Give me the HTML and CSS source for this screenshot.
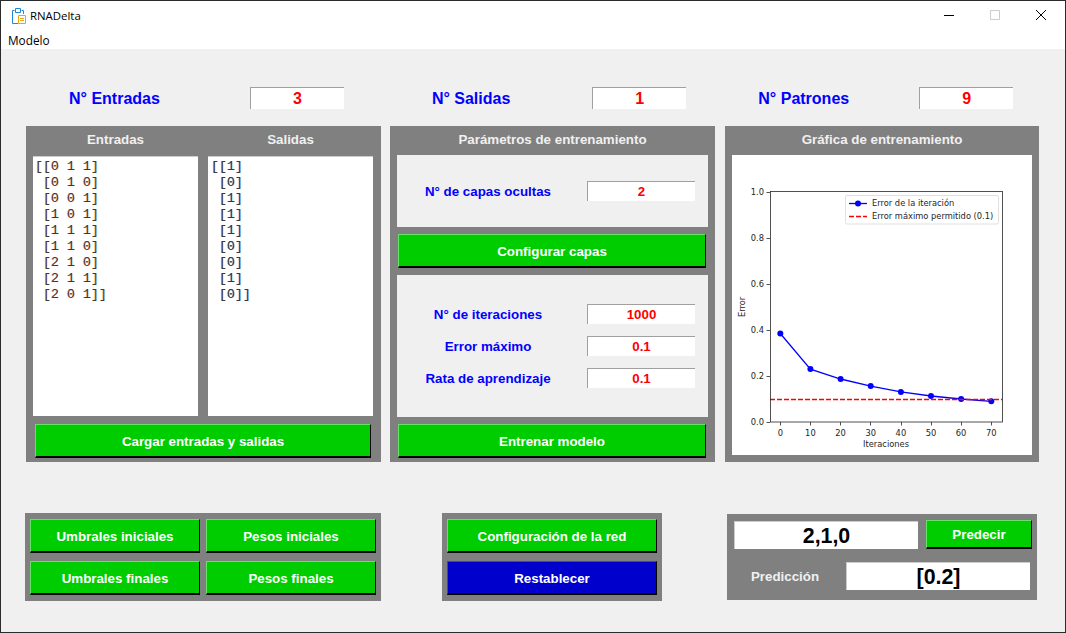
FILE: index.html
```html
<!DOCTYPE html>
<html lang="es">
<head>
    <meta charset="UTF-8">
    <title>RNADelta</title>
    <link rel="stylesheet" href="styles.css">
</head>
<body>
    <div class="window">
        <div class="titlebar">
            <svg class="app-icon" width="16" height="18" viewBox="0 0 16 18">
                <path d="M3.5 3.5H1.5V16.5H7M10.5 3.5H12.5V7" fill="none" stroke="#1e88d8"/>
                <path d="M4.5 1.5H9.5V5.5H4.5Z" fill="#fff" stroke="#1e88d8"/>
                <path d="M7.5 8.5H14.5V16.5H7.5Z" fill="#fff" stroke="#e8a317"/>
                <path d="M9 11.5H13M9 13.5H13" stroke="#e8a317"/>
            </svg>
            <span class="app-name">RNADelta</span>
            <div class="win-controls">
                <svg width="12" height="12" viewBox="0 0 12 12"><path d="M1 6.5H11" stroke="#000"/></svg>
                <svg width="12" height="12" viewBox="0 0 12 12"><path d="M1.5 1.5H10.5V10.5H1.5Z" fill="none" stroke="#ccc"/></svg>
                <svg width="12" height="12" viewBox="0 0 12 12"><path d="M1 1L11 11M11 1L1 11" stroke="#000"/></svg>
            </div>
        </div>
        <div class="menubar">Modelo</div>

        <main class="content">
            <div class="stats">
                <div class="stat stat-in"><span class="stat-label">N° Entradas</span><div class="field stat-field">3</div></div>
                <div class="stat stat-out"><span class="stat-label">N° Salidas</span><div class="field stat-field">1</div></div>
                <div class="stat stat-pat"><span class="stat-label">N° Patrones</span><div class="field stat-field">9</div></div>
            </div>

            <div class="panels">
                <section class="panel panel-data">
                    <div class="data-head"><span>Entradas</span><span>Salidas</span></div>
                    <div class="data-lists">
<pre class="list list-in">[[0 1 1]
 [0 1 0]
 [0 0 1]
 [1 0 1]
 [1 1 1]
 [1 1 0]
 [2 1 0]
 [2 1 1]
 [2 0 1]]</pre>
<pre class="list list-out">[[1]
 [0]
 [1]
 [1]
 [1]
 [0]
 [0]
 [1]
 [0]]</pre>
                    </div>
                    <button class="btn btn-wide">Cargar entradas y salidas</button>
                </section>

                <section class="panel panel-params">
                    <div class="panel-title">Parámetros de entrenamiento</div>
                    <div class="param-box box-layers">
                        <div class="param"><span class="param-label">N° de capas ocultas</span><div class="field param-field">2</div></div>
                    </div>
                    <button class="btn btn-wide">Configurar capas</button>
                    <div class="param-box box-train">
                        <div class="param"><span class="param-label">N° de iteraciones</span><div class="field param-field">1000</div></div>
                        <div class="param"><span class="param-label">Error máximo</span><div class="field param-field">0.1</div></div>
                        <div class="param"><span class="param-label">Rata de aprendizaje</span><div class="field param-field">0.1</div></div>
                    </div>
                    <button class="btn btn-wide">Entrenar modelo</button>
                </section>

                <section class="panel panel-chart">
                    <div class="panel-title">Gráfica de entrenamiento</div>
                    <div class="chart">
                        <svg width="300" height="300" viewBox="0 0 300 300">
                            <path class="ticks" d="M48.5 267v3.5M78.5 267v3.5M108.5 267v3.5M138.5 267v3.5M169.5 267v3.5M199.5 267v3.5M229.5 267v3.5M259.5 267v3.5M38 267.5h-3.5M38 221.5h-3.5M38 175.5h-3.5M38 129.5h-3.5M38 83.5h-3.5M38 37.5h-3.5"/>
                            <polyline class="line-err" points="48.3,178.5 78.4,214.1 108.6,224 138.7,231.1 168.9,236.9 199,241 229.1,244 259.3,246.3"/>
                            <g class="dots">
                                <circle cx="48.3" cy="178.5" r="3"/><circle cx="78.4" cy="214.1" r="3"/><circle cx="108.6" cy="224" r="3"/><circle cx="138.7" cy="231.1" r="3"/><circle cx="168.9" cy="236.9" r="3"/><circle cx="199" cy="241" r="3"/><circle cx="229.1" cy="244" r="3"/><circle cx="259.3" cy="246.3" r="3"/>
                            </g>
                            <line class="line-max" x1="38" y1="244.5" x2="270" y2="244.5"/>
                            <rect class="axes" x="38.5" y="36.5" width="232" height="230.5"/>
                            <g class="tick-x">
                                <text x="48.3" y="281">0</text><text x="78.4" y="281">10</text><text x="108.6" y="281">20</text><text x="138.7" y="281">30</text><text x="168.9" y="281">40</text><text x="199" y="281">50</text><text x="229.1" y="281">60</text><text x="259.3" y="281">70</text>
                            </g>
                            <g class="tick-y">
                                <text x="32" y="270">0.0</text><text x="32" y="224">0.2</text><text x="32" y="178">0.4</text><text x="32" y="132">0.6</text><text x="32" y="86">0.8</text><text x="32" y="40">1.0</text>
                            </g>
                            <text class="axis-name" x="154" y="292">Iteraciones</text>
                            <text class="axis-name" transform="translate(13 152) rotate(-90)">Error</text>
                            <rect class="legend" x="113.5" y="40.5" width="153" height="28.5" rx="1.5"/>
                            <line class="legend-err" x1="117" y1="48.5" x2="135" y2="48.5"/>
                            <circle class="legend-dot" cx="126" cy="48.5" r="3"/>
                            <line class="line-max" x1="117" y1="61.5" x2="135" y2="61.5"/>
                            <text class="legend-text" x="140" y="51">Error de la iteración</text>
                            <text class="legend-text" x="140" y="64">Error máximo permitido (0.1)</text>
                        </svg>
                    </div>
                </section>
            </div>

            <div class="actions">
                <section class="group group-matrix">
                    <button class="btn">Umbrales iniciales</button>
                    <button class="btn">Pesos iniciales</button>
                    <button class="btn">Umbrales finales</button>
                    <button class="btn">Pesos finales</button>
                </section>
                <section class="group group-net">
                    <button class="btn">Configuración de la red</button>
                    <button class="btn btn-blue">Restablecer</button>
                </section>
                <section class="group-predict">
                    <div class="predict-row">
                        <div class="field big-field">2,1,0</div>
                        <button class="btn btn-predict">Predecir</button>
                    </div>
                    <div class="predict-row result-row">
                        <span class="result-label">Predicción</span>
                        <div class="field big-field">[0.2]</div>
                    </div>
                </section>
            </div>
        </main>
    </div>
</body>
</html>
```

FILE: styles.css
```css
:root {
    --bg-color: #f0f0f0;
    --panel-color: #808080;
    --green: #00cd00;
    --blue-btn: #0000cd;
}

* {
    box-sizing: border-box;
}

html, body {
    margin: 0;
    height: 100%;
    overflow: hidden;
    background-color: #222;
}

body {
    font-family: "Liberation Sans", Arial, sans-serif;
}

.window {
    height: 633px;
    border: 1px solid #2b2b2b;
    background-color: var(--bg-color);
    display: flex;
    flex-direction: column;
}

.titlebar {
    height: 29px;
    background-color: #fff;
    display: flex;
    align-items: center;
    padding-left: 10px;
}

.app-name {
    font-family: "Open Sans", "Noto Sans", sans-serif;
    font-size: 11.4px;
    margin-left: 3px;
}

.win-controls {
    margin-left: auto;
    display: flex;
    gap: 34px;
    padding-right: 18px;
    padding-bottom: 1px;
}

.menubar {
    height: 19px;
    background-color: #fff;
    font-family: "Open Sans", "Noto Sans", sans-serif;
    font-size: 11.8px;
    line-height: 21px;
    padding-left: 7px;
}

.content {
    flex: 1;
    padding-top: 38px;
}

/* top counters */
.stats {
    display: flex;
    height: 22px;
    margin-bottom: 17px;
}

.stat {
    display: flex;
    align-items: center;
}

.stat-label {
    font-size: 16px;
    font-weight: bold;
    color: #0000ff;
    padding-top: 1px;
}

.stat-in { margin-left: 68px; gap: 90px; }
.stat-out { margin-left: 88px; gap: 82px; }
.stat-pat { margin-left: 72px; gap: 70px; }

.field {
    background-color: #fff;
    border-top: 1px solid #a0a0a0;
    border-left: 1px solid #a0a0a0;
    color: #ff0000;
    font-weight: bold;
    text-align: center;
}

.stat-field {
    width: 94px;
    height: 22px;
    font-size: 16px;
    line-height: 21px;
}

/* main panels */
.panels {
    display: flex;
    height: 336px;
    padding-left: 25px;
    margin-bottom: 51px;
}

.panel {
    background-color: var(--panel-color);
    padding: 0 7px;
    display: flex;
    flex-direction: column;
}

.panel-data { width: 355px; }
.panel-params { width: 325px; margin-left: 9px; }
.panel-chart { width: 314px; margin-left: 10px; }

.panel-title,
.data-head span {
    color: #f0f0f0;
    font-size: 13.33px;
    font-weight: bold;
    text-align: center;
    height: 29px;
    line-height: 28px;
    flex: none;
}

.data-head {
    display: flex;
    gap: 10px;
}

.data-head span {
    width: 165px;
}

.data-lists {
    display: flex;
    gap: 10px;
    height: 260px;
    margin-top: 1px;
}

.list {
    width: 165px;
    margin: 0;
    padding: 2px 2px;
    background-color: #fff;
    border-top: 1px solid #ccc;
    font-family: "Liberation Mono", "Courier New", monospace;
    font-size: 13.33px;
    line-height: 16px;
    color: #3a3a3a;
}

.list-in { text-shadow: -0.6px 0 0 rgba(214, 120, 20, 0.7); }
.list-out {
    padding-left: 3px;
    text-shadow: -0.6px 0 0 rgba(20, 120, 214, 0.7);
}

.btn {
    display: block;
    font-family: "Liberation Sans", Arial, sans-serif;
    font-size: 13.33px;
    font-weight: bold;
    color: #fff;
    background-color: var(--green);
    border: 1px solid;
    border-color: #66e066 #000 #000 #66e066;
    border-bottom-width: 2px;
    padding: 2px 0 0;
    height: 34px;
}

.btn-blue {
    background-color: var(--blue-btn);
    border-color: #3f3fe0 #000 #000 #3f3fe0;
}

.btn-wide {
    width: 308px;
    margin-left: 1px;
    flex: none;
}

.panel-data .btn-wide {
    width: 336px;
    margin-left: 2px;
    margin-top: 8px;
}

.param-box {
    background-color: var(--bg-color);
    display: flex;
    flex-direction: column;
    justify-content: center;
    flex: none;
}

.box-layers {
    height: 72px;
    margin-bottom: 7px;
}

.box-train {
    height: 142px;
    margin-top: 7px;
    margin-bottom: 7px;
    gap: 12px;
}

.param {
    display: flex;
    align-items: center;
    height: 20px;
}

.param-label {
    width: 182px;
    margin-right: 8px;
    padding-top: 1px;
    text-align: center;
    font-size: 13.33px;
    font-weight: bold;
    color: #0000ff;
}

.param-field {
    width: 108px;
    height: 20px;
    font-size: 13.33px;
    line-height: 19px;
}

.chart {
    width: 300px;
    height: 300px;
    background-color: #fff;
}

.chart svg {
    display: block;
}

.ticks {
    stroke: #262626;
    stroke-width: 0.8;
    fill: none;
}

.axes {
    fill: none;
    stroke: #262626;
    stroke-width: 0.8;
}

.line-err,
.legend-err {
    fill: none;
    stroke: #0000ff;
    stroke-width: 1.3;
}

.dots circle,
.legend-dot {
    fill: #0000ff;
}

.line-max {
    stroke: #ff0000;
    stroke-width: 1.3;
    stroke-dasharray: 5 2;
}

.chart text {
    font-family: "DejaVu Sans", sans-serif;
    font-size: 8.3px;
    fill: #262626;
}

.tick-x text,
.axis-name {
    text-anchor: middle;
}

.tick-y text {
    text-anchor: end;
}

.legend {
    fill: #fff;
    stroke: #d8d8d8;
    stroke-width: 0.8;
}

/* bottom groups */
.actions {
    display: flex;
    align-items: center;
    height: 88px;
    padding-left: 24px;
}

.group {
    background-color: var(--panel-color);
    height: 88px;
    padding: 6px 5px;
    display: grid;
    row-gap: 8px;
    column-gap: 6px;
}

.group-matrix {
    width: 356px;
    grid-template-columns: 170px 170px;
}

.group-net {
    width: 220px;
    margin-left: 61px;
}

.group-net .btn {
    width: 210px;
}

.group-predict {
    width: 310px;
    height: 86px;
    margin-left: 65px;
    background-color: var(--panel-color);
    padding: 6px 5px 6px 7px;
}

.predict-row {
    display: flex;
    align-items: center;
    gap: 8px;
}

.result-row {
    margin-top: 13px;
    gap: 0;
}

.big-field {
    width: 184px;
    height: 28px;
    font-size: 21.33px;
    line-height: 28px;
    color: #000;
    border-color: #ccc;
}

.btn-predict {
    width: 106px;
    height: 29px;
    padding-top: 0;
}

.result-label {
    width: 112px;
    padding-right: 10px;
    text-align: center;
    color: #f0f0f0;
    font-size: 13.33px;
    font-weight: bold;
}
```
